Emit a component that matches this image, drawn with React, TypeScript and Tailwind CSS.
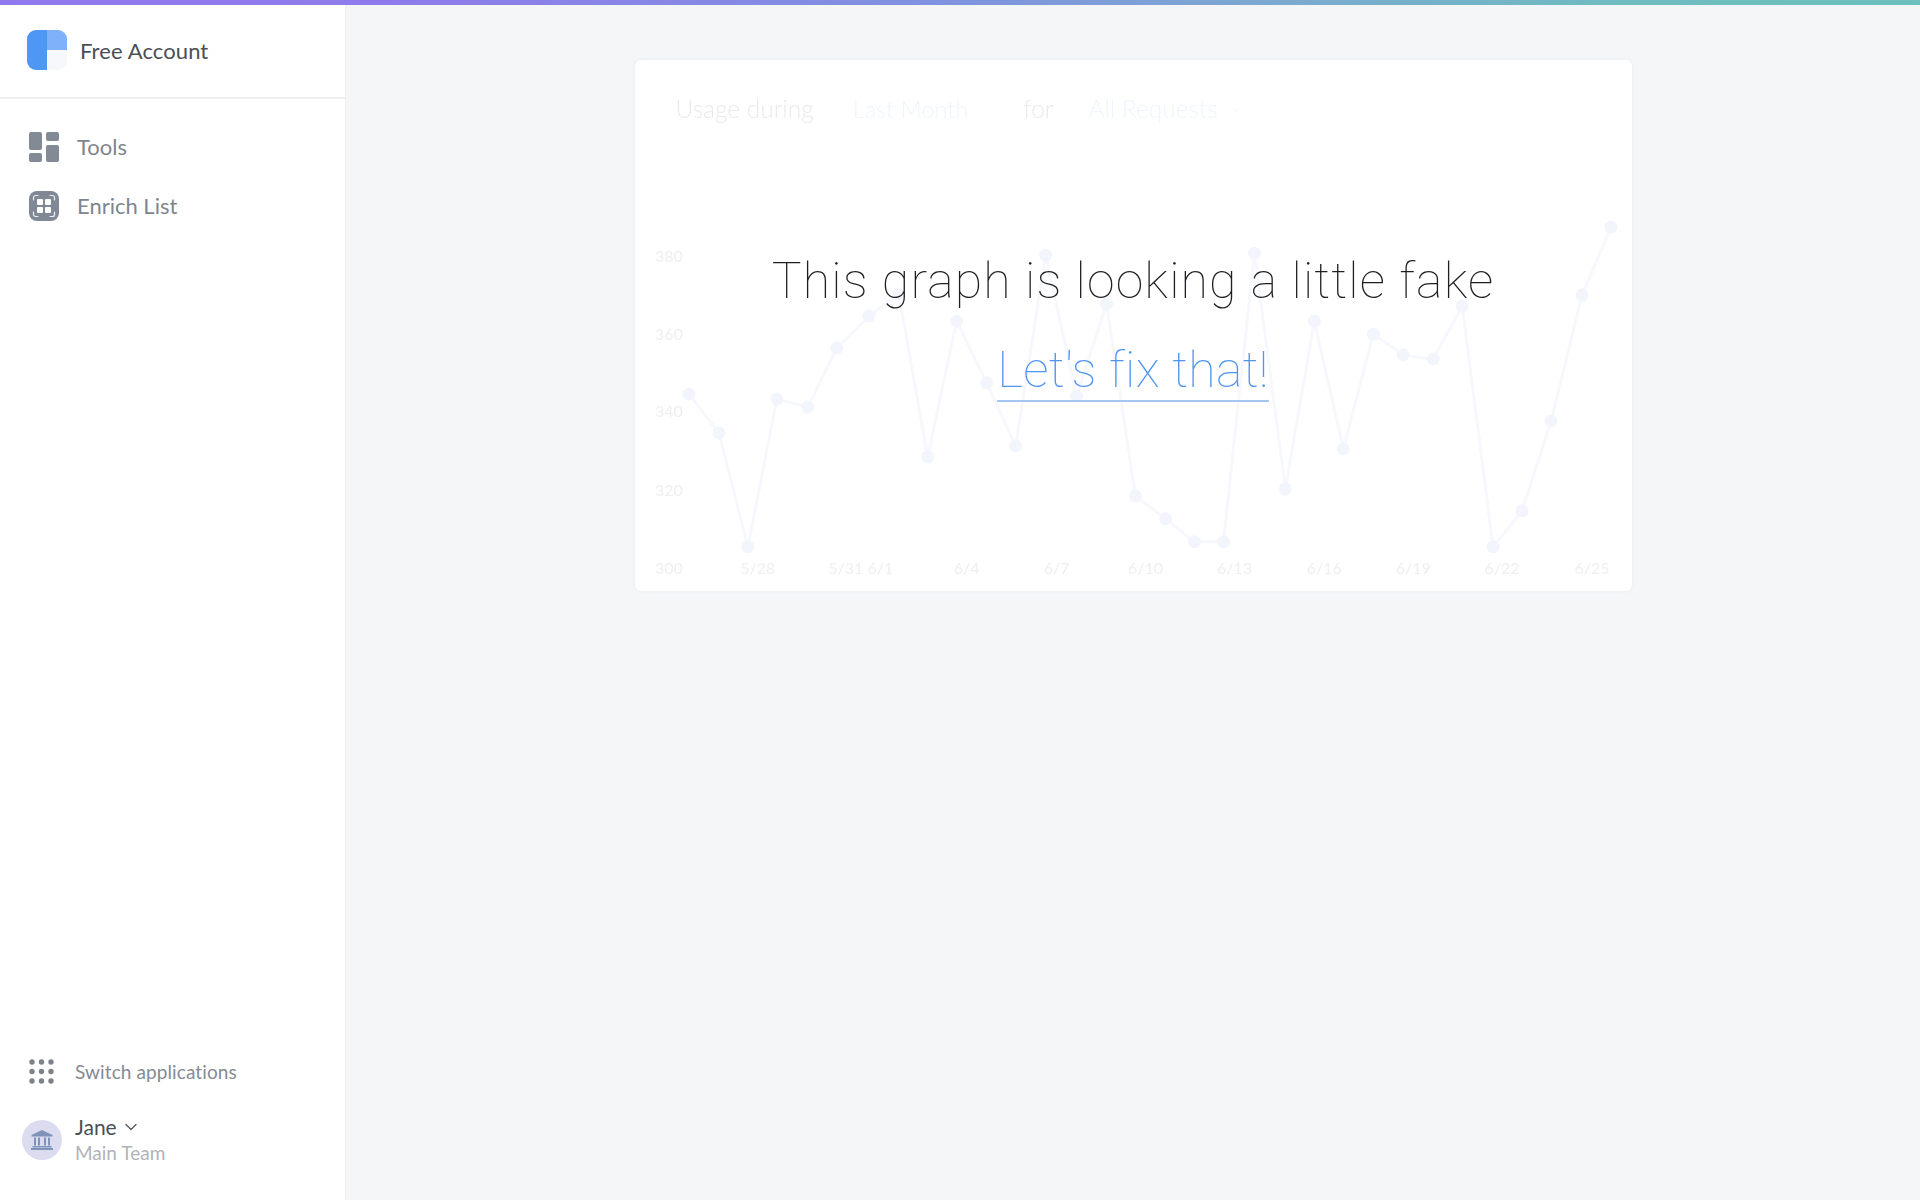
import { ChevronDown } from 'lucide-react';

const points = [
  [688, 394], [718, 433], [747, 547], [776, 399], [807, 407], [836, 348], [868, 316], [898, 294],
  [927, 457], [956, 321], [986, 383], [1015, 446], [1045, 255], [1076, 396], [1106, 304], [1135, 496],
  [1165, 519], [1194, 542], [1223, 542], [1254, 253], [1285, 489], [1314, 321], [1343, 449], [1373, 334],
  [1403, 355], [1433, 359], [1462, 306], [1493, 547], [1522, 511], [1551, 421], [1582, 295], [1611, 227],
];

const yLabels = [
  ['380', 256],
  ['360', 334],
  ['340', 411],
  ['320', 490],
  ['300', 568],
] as const;

const xLabels = [
  ['5/28', 757],
  ['5/31 6/1', 860],
  ['6/4', 966],
  ['6/7', 1056],
  ['6/10', 1145],
  ['6/13', 1234],
  ['6/16', 1324],
  ['6/19', 1413],
  ['6/22', 1502],
  ['6/25', 1592],
] as const;

function Logo() {
  return (
    <svg width="40" height="40" viewBox="0 0 40 40" className="shrink-0">
      <path d="M20 0H9a9 9 0 0 0-9 9v22a9 9 0 0 0 9 9h11z" fill="#4f97f5" />
      <path d="M20 0h11a9 9 0 0 1 9 9v11H20z" fill="#7db2fb" />
      <path d="M20 20h20v11a9 9 0 0 1-9 9H20z" fill="#f6f8fc" />
    </svg>
  );
}

function ToolsIcon() {
  return (
    <svg width="30" height="30" viewBox="0 0 30 30" className="shrink-0" fill="#828a96">
      <rect x="0" y="0" width="13" height="18" rx="2" />
      <rect x="17" y="0" width="13" height="9" rx="2" />
      <rect x="0" y="21" width="13" height="9" rx="2" />
      <rect x="17" y="13" width="13" height="17" rx="2" />
    </svg>
  );
}

function EnrichIcon() {
  return (
    <svg width="30" height="30" viewBox="0 0 30 30" className="shrink-0">
      <rect width="30" height="30" rx="8" fill="#7f8894" />
      <g fill="#fff">
        <rect x="8" y="8" width="6" height="6" rx="1" />
        <rect x="16" y="8" width="6" height="6" rx="1" />
        <rect x="8" y="16" width="6" height="6" rx="1" />
        <rect x="16" y="16" width="6" height="6" rx="1" />
      </g>
      <g fill="none" stroke="#fff" strokeWidth="1.2" strokeLinecap="round" opacity="0.85">
        <path d="M4.500 9V6.500a2 2 0 0 1 2-2H9" />
        <path d="M21 4.500h2.500a2 2 0 0 1 2 2V9" />
        <path d="M25.500 21v2.500a2 2 0 0 1-2 2H21" />
        <path d="M9 25.500H6.500a2 2 0 0 1-2-2V21" />
      </g>
    </svg>
  );
}

function DotsIcon() {
  const spots = [3, 12.5, 22];
  return (
    <svg width="25" height="25" viewBox="0 0 25 25" className="shrink-0" fill="#7d8288">
      {spots.map((y) => spots.map((x) => <circle key={`${x}-${y}`} cx={x} cy={y} r="2.700" />))}
    </svg>
  );
}

function BankIcon() {
  return (
    <svg width="22" height="20" viewBox="0 0 22 20" fill="#7f93b8">
      <path d="M11 0 21.500 5v1.500H.5V5z" />
      <rect x="3" y="7.500" width="2" height="8" />
      <rect x="7" y="7.500" width="2" height="8" />
      <rect x="13" y="7.500" width="2" height="8" />
      <rect x="17" y="7.500" width="2" height="8" />
      <rect x="1.500" y="16" width="19" height="1.500" />
      <rect x="0" y="18" width="22" height="2" />
    </svg>
  );
}

function FakeChart() {
  return (
    <svg viewBox="634 160 998 431" className="block w-full h-[431px] blur-[0.7px]">
      <polyline
        points={points.map((p) => p.join(',')).join(' ')}
        fill="none"
        stroke="#f6f8fe"
        strokeWidth="3"
      />
      {points.map(([x, y]) => (
        <circle key={x} cx={x} cy={y} r="6.500" fill="#f2f5fb" />
      ))}
      <g fill="#eeeff1" fontSize="16" fontFamily="Lato, sans-serif">
        {yLabels.map(([label, y]) => (
          <text key={label} x="654" y={y + 6}>{label}</text>
        ))}
        {xLabels.map(([label, x]) => (
          <text key={label} x={x} y="574" textAnchor="middle">{label}</text>
        ))}
      </g>
    </svg>
  );
}

export default function App() {
  return (
    <div className="min-h-screen flex flex-col bg-[#f5f6f8] font-['Lato',sans-serif]">
      <div className="h-[5px] shrink-0 bg-[linear-gradient(90deg,#9178ee_0%,#8f7bec_20%,#7f93df_50%,#7da5d3_63%,#6fbcc0_85%,#6dc0be_100%)]" />
      <div className="flex-1 flex">
        <aside className="w-[346px] shrink-0 flex flex-col bg-white border-r border-[#eef0f2]">
          <div className="h-[94px] flex items-center gap-[13px] pl-[27px] pb-[2px] border-b-2 border-[#eeeff1]">
            <Logo />
            <span className="text-[22px] tracking-[0.1px] text-[#4a4f55]">Free Account</span>
          </div>
          <nav className="flex flex-col gap-[29px] pt-[33px] pl-[29px]">
            <div className="flex items-center gap-[18px] h-[30px]">
              <ToolsIcon />
              <span className="text-[22px] pb-[2px] text-[#7f858d]">Tools</span>
            </div>
            <div className="flex items-center gap-[18px] h-[30px]">
              <EnrichIcon />
              <span className="text-[22px] pb-[2px] text-[#7f858d]">Enrich List</span>
            </div>
          </nav>
          <div className="mt-auto pb-[34px]">
            <div className="flex items-center gap-[21px] pl-[29px]">
              <DotsIcon />
              <span className="text-[19px] tracking-[0.1px] text-[#858b92]">Switch applications</span>
            </div>
            <div className="flex items-center gap-[13px] pl-[22px] mt-[28px]">
              <div className="w-[40px] h-[40px] rounded-full bg-[#dcdcf0] flex items-center justify-center">
                <BankIcon />
              </div>
              <div className="flex flex-col">
                <div className="flex items-center gap-[4px] text-[21px] leading-[26px] text-[#4a4f55]">
                  Jane
                  <ChevronDown size={20} strokeWidth={1.75} className="text-[#5c6168]" />
                </div>
                <span className="text-[19px] leading-[26px] text-[#b0b3b8]">Main Team</span>
              </div>
            </div>
          </div>
        </aside>
        <main className="flex-1 flex justify-center items-start pt-[55px]">
          <div className="relative w-[997px] bg-white rounded-[6px] shadow-[0_0_4px_rgba(30,40,70,0.05)]">
            <div className="h-[100px] flex items-start pt-[32px] pl-[41px] text-[24.500px] leading-[34px] font-light blur-[0.5px]">
              <span className="text-[#e9eaeb]">Usage during</span>
              <span className="ml-[39px] text-[23.500px] text-[#eef5fe]">Last Month</span>
              <span className="ml-[55px] text-[#e9eaeb]">for</span>
              <span className="ml-[35px] text-[#eef5fe]">All Requests</span>
              <ChevronDown size={12} className="ml-[12px] mt-[12px] text-[#f2f6fd]" />
            </div>
            <FakeChart />
            <div className="absolute left-0 right-0 top-[191px] flex flex-col items-center font-['Roboto',sans-serif] font-thin [font-variant-ligatures:none]">
              <h2 className="text-[50px] leading-[60px] font-thin tracking-[1.15px] text-[#1d1f22]">
                This graph is looking a little fake
              </h2>
              <a className="mt-[30px] pb-[1px] text-[50px] leading-[58px] tracking-[0.3px] text-[#4f95ef] border-b-2 border-[#a5c6f1]">
                Let's fix that!
              </a>
            </div>
          </div>
        </main>
      </div>
    </div>
  );
}
